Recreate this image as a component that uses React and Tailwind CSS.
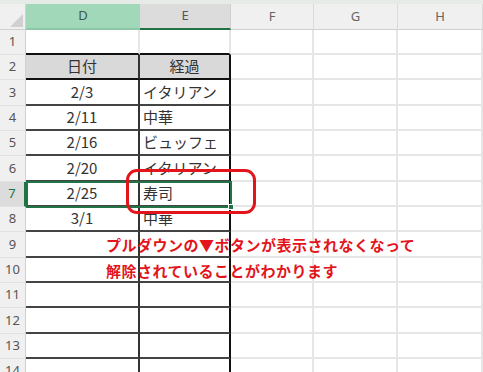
import React from "react";

const rows = [
  { n: 1, h: "h-[25px]" },
  { n: 2, h: "h-[25px]", d: "日付", e: "経過", hdr: true },
  { n: 3, h: "h-[26px]", d: "2/3", e: "イタリアン" },
  { n: 4, h: "h-[25px]", d: "2/11", e: "中華" },
  { n: 5, h: "h-[25px]", d: "2/16", e: "ビュッフェ" },
  { n: 6, h: "h-[26px]", d: "2/20", e: "イタリアン" },
  { n: 7, h: "h-[25px]", d: "2/25", e: "寿司", sel: true },
  { n: 8, h: "h-[25px]", d: "3/1", e: "中華" },
  { n: 9, h: "h-[26px]" },
  { n: 10, h: "h-[25px]" },
  { n: 11, h: "h-[25px]" },
  { n: 12, h: "h-[26px]" },
  { n: 13, h: "h-[25px]" },
  { n: 14, h: "h-[25px]" },
];

const jp = { fontFamily: '"Noto Sans CJK JP", "Noto Sans", sans-serif' };

function Row({ r }) {
  const inTable = r.n >= 2;
  const rowHdr = r.sel
    ? "bg-[#dcdcdc] text-[#217346] border-r-2 border-r-[#217346]"
    : "bg-[#f0f0f0] text-[#555] border-r border-r-[#d0d0d0]";
  const tableBottom =
    r.n === 1 || r.n === 2
      ? "border-b-2 border-b-[#111]"
      : "border-b-2 border-b-[#444]";
  const lightCell = "border-b-2 border-b-[#e6e6e6] border-r-2 border-r-[#e6e6e6]";
  return (
    <div className={`flex ${r.h}`}>
      <div
        className={`w-[26px] shrink-0 flex items-center justify-center text-[13px] border-b border-b-[#e2e2e2] ${rowHdr}`}
        style={{ fontFamily: '"Noto Sans", sans-serif' }}
      >
        {r.n}
      </div>
      {inTable ? (
        <>
          <div
            className={`w-[114px] shrink-0 flex items-center justify-center text-[15px] text-[#333] border-r-2 border-r-[#333] ${tableBottom} ${
              r.hdr ? "bg-[#d9d9d9]" : "bg-white"
            }`}
            style={jp}
          >
            {r.d}
          </div>
          <div
            className={`w-[91px] shrink-0 flex items-center text-[15px] text-[#333] border-r-2 border-r-[#111] ${tableBottom} ${
              r.hdr ? "bg-[#d9d9d9] justify-center" : "bg-white pl-[3px]"
            }`}
            style={jp}
          >
            {r.e}
          </div>
        </>
      ) : (
        <>
          <div className="w-[114px] shrink-0 border-b-2 border-b-[#111] border-r-2 border-r-[#e6e6e6] bg-white" />
          <div className="w-[91px] shrink-0 border-b-2 border-b-[#111] border-r-2 border-r-[#e6e6e6] bg-white" />
        </>
      )}
      <div className={`w-[83px] shrink-0 bg-white ${lightCell}`} />
      <div className={`w-[84px] shrink-0 bg-white ${lightCell}`} />
      <div className={`w-[85px] shrink-0 bg-white ${lightCell}`} />
    </div>
  );
}

export default function App() {
  const hdrFont = { fontFamily: '"Noto Sans", "Liberation Sans", sans-serif' };
  return (
    <div className="relative w-[483px] h-[372px] overflow-hidden bg-white">
      <div className="h-[4px] bg-[#e6ebe7]" />
      <div className="flex h-[26px] text-[13px] text-[#666]" style={hdrFont}>
        <div className="relative w-[26px] shrink-0 bg-[#f0f0f0] border-r border-r-[#d0d0d0] border-b border-b-[#d0d0d0]">
          <svg className="absolute right-[2px] bottom-[2px]" width="13" height="13" viewBox="0 0 13 13">
            <polygon points="13,0 13,13 0,13" fill="#d0d0d0" />
          </svg>
        </div>
        <div className="w-[114px] shrink-0 bg-[#a0d8b9] flex items-center justify-center text-[#3f5a49] border-b-2 border-b-[#8cc8a6]">
          D
        </div>
        <div className="w-[91px] shrink-0 bg-[#dcdcdc] flex items-center justify-center text-[#555] border-b-2 border-b-[#217346] border-r border-r-[#d0d0d0]">
          E
        </div>
        <div className="w-[83px] shrink-0 bg-[#f0f0f0] flex items-center justify-center border-b border-b-[#d0d0d0] border-r border-r-[#dadada]">
          F
        </div>
        <div className="w-[84px] shrink-0 bg-[#f0f0f0] flex items-center justify-center border-b border-b-[#d0d0d0] border-r border-r-[#dadada]">
          G
        </div>
        <div className="w-[85px] shrink-0 bg-[#f0f0f0] flex items-center justify-center border-b border-b-[#d0d0d0] border-r border-r-[#dadada]">
          H
        </div>
      </div>
      {rows.map((r) => (
        <Row key={r.n} r={r} />
      ))}

      {/* selection box D7:E7 */}
      <div className="absolute left-[26px] top-[181px] w-[206px] h-[27px] border-2 border-[#217346] pointer-events-none" />
      <div className="absolute left-[228px] top-[204px] w-[6px] h-[6px] bg-[#217346] border border-white" />

      {/* red rounded box */}
      <div className="absolute left-[126px] top-[169px] w-[130px] h-[45px] border-[3px] border-[#e3141b] rounded-[11px]" />

      {/* red annotation text */}
      <div
        className="absolute left-[106px] top-[232px] text-[15px] font-bold text-[#e3141b] leading-[26px] tracking-[0.5px] whitespace-nowrap"
        style={jp}
      >
        <div>プルダウンの▼ボタンが表示されなくなって</div>
        <div>解除されていることがわかります</div>
      </div>
    </div>
  );
}
